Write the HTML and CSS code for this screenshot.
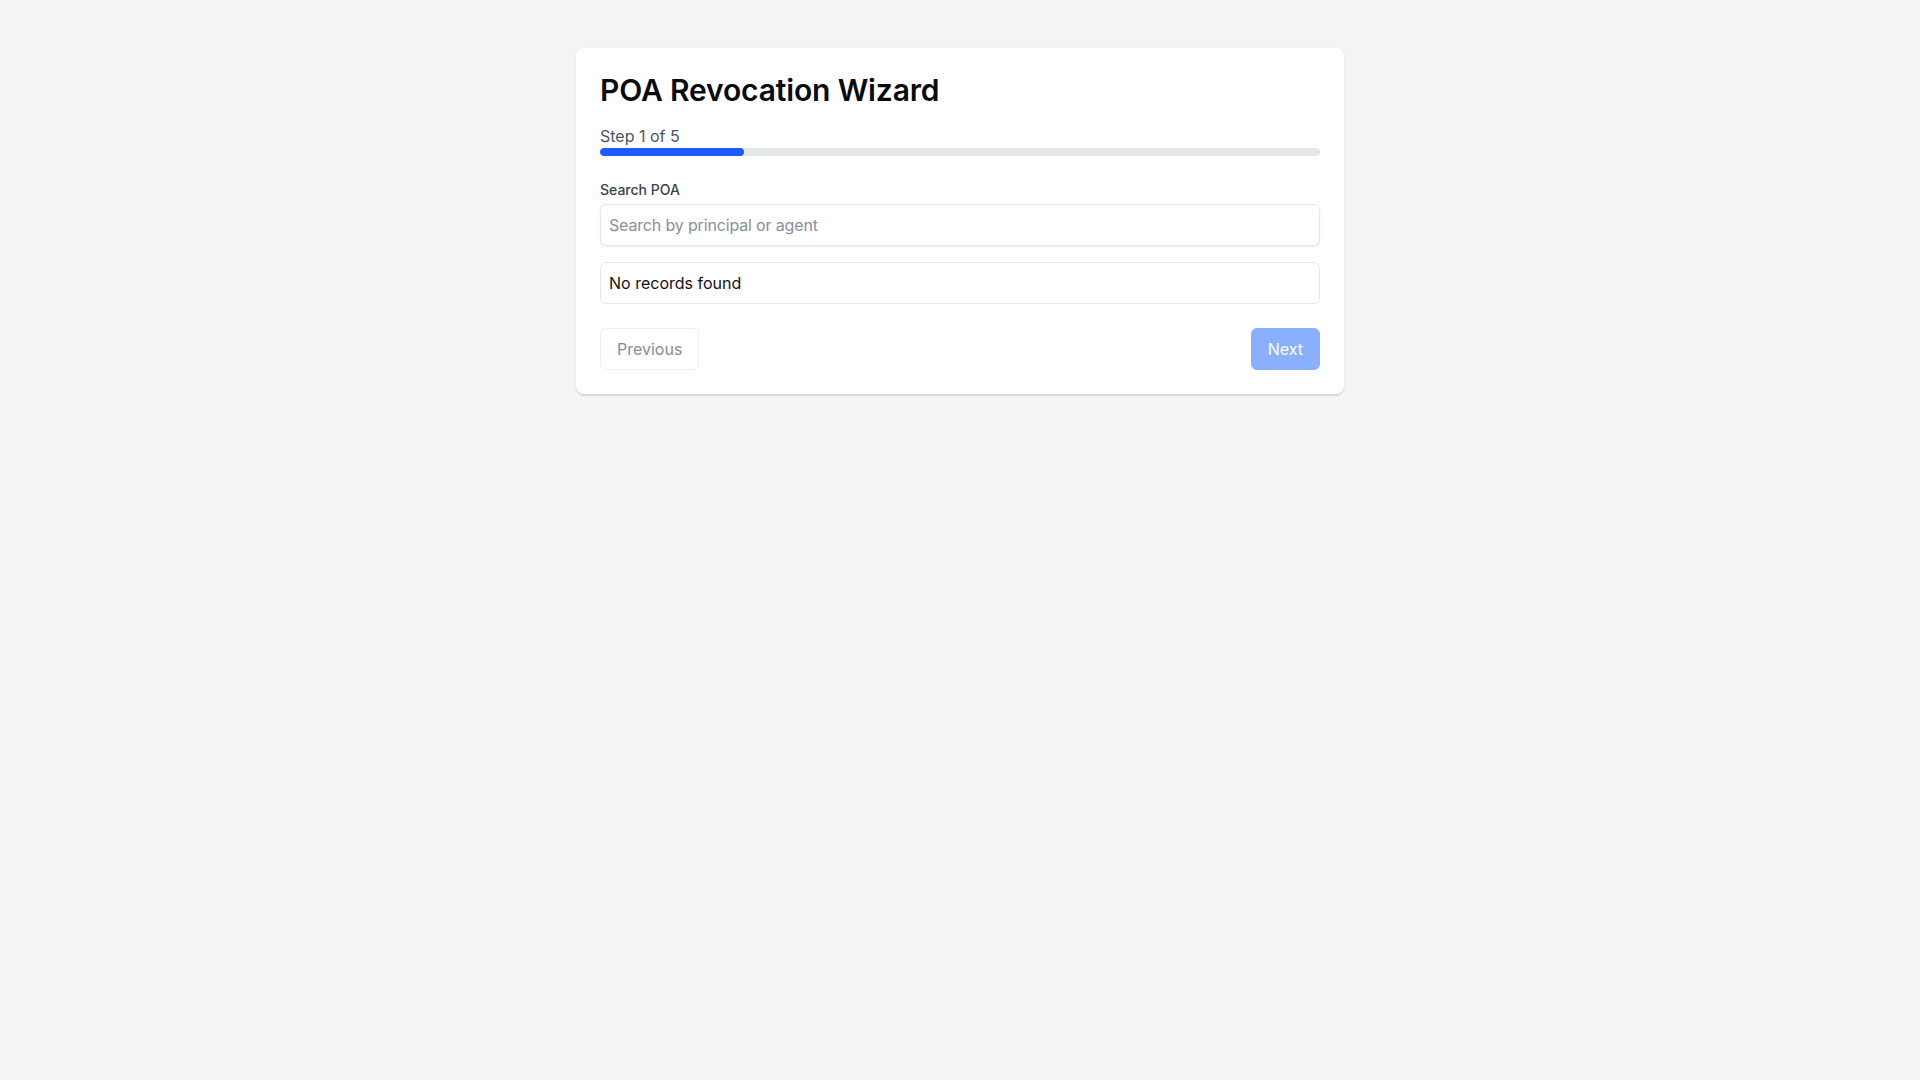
FILE: index.html
```html
<!DOCTYPE html>
<html lang="en">
<head>
<meta charset="utf-8">
<title>POA Revocation Wizard</title>
<link rel="stylesheet" href="styles.css">
</head>
<body>
<main class="page">
  <section class="card">
    <h1 class="title">POA Revocation Wizard</h1>
    <div class="step">Step 1 of 5</div>
    <div class="progress"><div class="progress-fill" style="width: 20%"></div></div>
    <label class="label" for="search">Search POA</label>
    <input id="search" class="input" type="text" placeholder="Search by principal or agent">
    <div class="results">No records found</div>
    <div class="actions">
      <button class="btn btn-secondary" disabled>Previous</button>
      <button class="btn btn-primary" disabled>Next</button>
    </div>
  </section>
</main>
</body>
</html>
```

FILE: styles.css
```css
* { box-sizing: border-box; }
html, body {
  margin: 0;
  padding: 0;
  background: #f3f4f6;
  font-family: Inter, "Noto Sans", sans-serif;
  color: #111827;
}
.page {
  padding: 48px 0;
  display: flex;
  justify-content: center;
}
.card {
  width: 768px;
  background: #ffffff;
  border-radius: 8px;
  padding: 24px;
  box-shadow: 0 2px 0 #d8d9dc, 0 1px 3px rgba(0,0,0,0.06);
  display: flex;
  flex-direction: column;
}
.title {
  margin: 0 0 16px 0;
  font-size: 30px;
  line-height: 36px;
  font-weight: 600;
  letter-spacing: -0.005em;
  color: #0b0b0c;
}
.step {
  font-size: 16px;
  line-height: 24px;
  color: #4b5563;
}
.progress {
  height: 8px;
  border-radius: 9999px;
  background: #e5e7eb;
  overflow: hidden;
  margin-bottom: 24px;
}
.progress-fill {
  height: 100%;
  background: #1a5dfc;
  border-radius: 9999px;
}
.label {
  font-size: 14px;
  line-height: 20px;
  font-weight: 500;
  color: #374151;
  margin-bottom: 4px;
}
.input {
  display: block;
  width: 100%;
  height: 42px;
  padding: 8px;
  font-family: inherit;
  font-size: 16px;
  line-height: 24px;
  letter-spacing: -0.01em;
  color: #111827;
  border: 1px solid #e5e7eb;
  border-radius: 6px;
  box-shadow: 0 1px 2px rgba(0,0,0,0.08);
  outline: none;
  background: #fff;
}
.input::placeholder { color: #8a8f98; }
.results {
  margin-top: 16px;
  padding: 8px;
  font-size: 16px;
  line-height: 24px;
  color: #111111;
  border: 1px solid #e5e7eb;
  border-radius: 6px;
}
.actions {
  margin-top: 24px;
  display: flex;
  justify-content: space-between;
}
.btn {
  font-family: inherit;
  font-size: 16px;
  line-height: 24px;
  padding: 8px 16px;
  height: 42px;
  border-radius: 6px;
  cursor: default;
}
.btn-secondary {
  background: #fff;
  color: #8b8b8b;
  border: 1px solid #eeeff1;
}
.btn-primary {
  background: #8aaffc;
  color: #ffffff;
  border: 1px solid #8aaffc;
}
```
